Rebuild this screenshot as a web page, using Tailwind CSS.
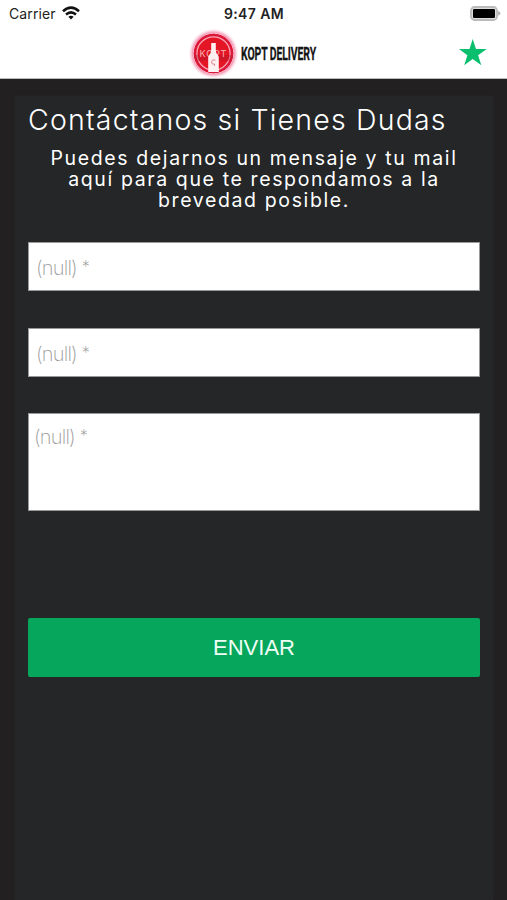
<!DOCTYPE html>
<html lang="es">
<head>
<meta charset="utf-8">
<title>Kopt Delivery</title>
<script src="https://cdn.jsdelivr.net/npm/@tailwindcss/browser@4"></script>
</head>
<body class="w-[507px] h-[900px] overflow-hidden bg-[#232021] font-['Inter',sans-serif] flex flex-col">
<header class="h-[79px] shrink-0 bg-white border-b border-[#bbb] flex flex-col">
  <div class="h-[27px] grid grid-cols-3 items-center pl-[9px] pr-[6px] text-[#222] text-[14px] leading-[27px]">
    <div class="flex items-center gap-[6px]">
      <span class="tracking-[0.1px]">Carrier</span>
      <svg class="w-[18px] h-[14px] -mt-[2px]" viewBox="0 0 18 14" fill="none" stroke="#111" stroke-width="2.5"><path d="M1 5.2Q9-2 17 5.2M4 8.5q5-4.3 10 0"/><path d="M6.4 10.8q2.6-2 5.2 0L9 13.6z" fill="#111" stroke="none"/></svg>
    </div>
    <span class="text-center font-semibold whitespace-nowrap tracking-[0.4px] -ml-[2px]">9:47 AM</span>
    <svg class="w-[31px] h-[15px] justify-self-end" viewBox="0 0 31 15"><rect x="1" y="1" width="26" height="13" rx="3.5" fill="#ddd" stroke="#bbb" stroke-width="1.8"/><rect x="3" y="3" width="22" height="9" rx="1.2" fill="#000"/><path d="M28.2 4.7q4.2 2.6 0 5.2z" fill="#aaa"/></svg>
  </div>
  <div class="h-[51px] grid grid-cols-[188px_1fr_48px] items-center">
    <span></span>
    <div class="flex items-center">
      <svg class="w-[50px] h-[52px]" viewBox="0 0 50 52">
        <defs><radialGradient id="g"><stop offset=".8" stop-color="#f07298"/><stop offset="1" stop-color="#ffd5e3" stop-opacity="0"/></radialGradient></defs>
        <circle cx="25.5" cy="26.5" r="25" fill="url(#g)"/>
        <circle cx="25.5" cy="26.5" r="20.3" fill="#dc1738" stroke="#f9bfd0" stroke-width="1"/>
        <circle cx="25.5" cy="26.5" r="16.6" fill="#e41524" stroke="#f9a5b5" stroke-width="1.2"/>
        <path d="M6 28h39q0 4-2 6H8q-2-2-2-6z" fill="#b3182a" opacity=".35"/>
        <text x="25" y="29.5" text-anchor="middle" font-family="Inter" font-weight="500" font-size="9" textLength="27" fill="#f3a2a6">KOPT</text>
        <path d="M23.2 16h4.6v7q0 3 2 5 1 1 1 3v14H20.2V31q0-2 1-3 2-2 2-5z" fill="#fff1f1"/>
        <path d="M27.5 33q-4-1-4 2t3 2v2" fill="none" stroke="#df8791" stroke-width="1"/>
      </svg>
      <svg class="w-[82px] h-[24px]" viewBox="0 0 82 24"><text x="3" y="19" font-family="Roboto" font-weight="700" font-size="18.5" transform="translate(3 0) scale(.565 1) translate(-3 0)" textLength="133" fill="#151515" stroke="#151515" stroke-width=".3">KOPT DELIVERY</text></svg>
    </div>
    <svg class="w-[28px] h-[28px]" viewBox="0 0 28 28"><path d="M13.7 0l3.3 10h10.7l-8.6 6.3 3.2 10-8.6-6.2-8.5 6.2 3.2-10L0 10h10.5z" fill="#09be6c"/></svg>
  </div>
</header>
<main class="flex-1 mt-[17px] ml-[15px] mr-[14px] px-[13px] bg-[#242628] flex flex-col shadow-[0_0_3px_#242628]">
  <h1 class="mt-[7px] h-[34px] text-[28.5px] leading-[34px] font-[350] text-white tracking-[1.18px] whitespace-nowrap">Contáctanos si Tienes Dudas</h1>
  <p class="mt-[11px] h-[63px] text-center text-[19.5px] leading-[21px] text-white tracking-[1.62px] whitespace-nowrap">Puedes dejarnos un mensaje y tu mail<br>aquí para que te respondamos a la<br>brevedad posible.</p>
  <div class="mt-[31px] h-[49px] shrink-0 w-[452px] bg-white border border-[#999] px-[7px] text-[20px] leading-[50px] font-extralight text-[#999] tracking-[-0.8px] whitespace-pre">(null) <span class="inline-block text-[16px] leading-none -translate-y-[3px]">*</span></div>
  <div class="mt-[37px] h-[49px] shrink-0 w-[452px] bg-white border border-[#999] px-[7px] text-[20px] leading-[50px] font-extralight text-[#999] tracking-[-0.8px] whitespace-pre">(null) <span class="inline-block text-[16px] leading-none -translate-y-[3px]">*</span></div>
  <div class="mt-[36px] h-[98px] shrink-0 w-[452px] bg-white border border-[#999] px-[5px] pt-[11px] text-[20px] leading-[24px] font-extralight text-[#999] tracking-[-0.8px] whitespace-pre">(null) <span class="inline-block text-[16px] leading-none -translate-y-[3px]">*</span></div>
  <button class="mt-[107.4px] h-[59px] shrink-0 w-[452px] rounded-[2px] bg-[#06a65c] font-['Liberation_Sans',sans-serif] text-[22px] leading-[60px] text-[#effff5]">ENVIAR</button>
</main>
</body>
</html>
